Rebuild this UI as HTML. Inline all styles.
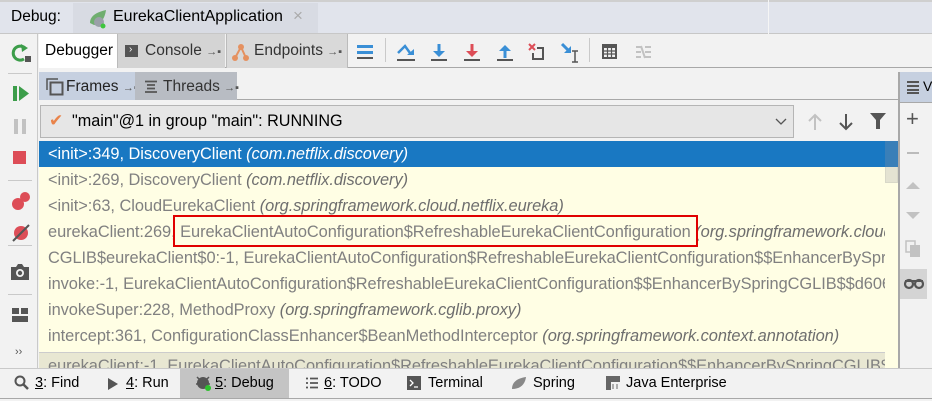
<!DOCTYPE html>
<html><head><meta charset="utf-8"><style>
*{margin:0;padding:0;box-sizing:border-box}
body{width:932px;height:401px;overflow:hidden;background:#f2f2f2;font-family:"Liberation Sans",sans-serif;font-size:14px;color:#000;position:relative}
.a{position:absolute;white-space:nowrap}
.row{position:absolute;left:39px;width:846px;height:26px;line-height:26px;padding-left:9px;color:#808080;font-size:16.4px;letter-spacing:-0.05px;white-space:nowrap;overflow:hidden}
.row i{color:#6e6e6e}
.sep{position:absolute;background:#c9c9c9}
</style></head><body>
<div class="a" style="left:0;top:0;width:932px;height:34px;background:#e1e4ec;border-top:2px solid #cfcfcf;border-bottom:1px solid #c7c7c7"></div>
<div class="a" style="left:768px;top:0;width:1px;height:34px;background:#f5f5f5"></div>
<div class="a" style="left:11px;top:8px;font-size:15.5px">Debug:</div>
<div class="a" style="left:73px;top:3px;width:245px;height:30px;background:#d8dbe3"></div>
<svg class="a" style="left:88px;top:9px" width="22" height="20"><path d="M2 14 C2 6 10 3 18 1 C17 8 14 15 6 16 Z" fill="#6fae6f"/><circle cx="11" cy="13" r="5" fill="#9aa0a8"/><circle cx="15" cy="17" r="2.5" fill="#3ec63e"/></svg>
<div class="a" style="left:113px;top:8px;font-size:16px">EurekaClientApplication</div>
<div class="a" style="left:293px;top:6px;font-size:17px;color:#aaa">×</div>
<div class="a" style="left:0;top:34px;width:38px;height:334px;background:#f2f2f2;border-right:1px solid #c9c9c9"></div>
<svg class="a" style="left:10px;top:42px" width="22" height="22"><path d="M15 6 A7 7 0 1 0 14 17" stroke="#3c9d4a" stroke-width="3" fill="none"/><path d="M11 2 L18 6 L12 10Z" fill="#3c9d4a"/><rect x="15" y="14" width="6" height="6" fill="#555"/></svg>
<div class="sep" style="left:8px;top:73px;width:24px;height:1px"></div>
<svg class="a" style="left:12px;top:85px" width="18" height="18"><rect x="1" y="1" width="4" height="15" fill="#3c9d4a"/><path d="M7 1 L17 8.5 L7 16Z" fill="#3c9d4a"/></svg>
<svg class="a" style="left:12px;top:118px" width="18" height="18"><rect x="2" y="1" width="4" height="15" fill="#c2c2c2"/><rect x="10" y="1" width="4" height="15" fill="#c2c2c2"/></svg>
<div class="a" style="left:13px;top:151px;width:13px;height:13px;background:#dd4d57"></div>
<div class="sep" style="left:8px;top:180px;width:24px;height:1px"></div>
<svg class="a" style="left:10px;top:190px" width="22" height="22"><circle cx="8" cy="14" r="6" fill="#dd4d57"/><circle cx="15" cy="7" r="5" fill="#dd4d57"/></svg>
<svg class="a" style="left:10px;top:222px" width="22" height="22"><circle cx="11" cy="11" r="7" fill="#dd4d57"/><path d="M3 19 L19 3" stroke="#555" stroke-width="2"/></svg>
<div class="sep" style="left:8px;top:245px;width:24px;height:1px"></div>
<svg class="a" style="left:10px;top:263px" width="20" height="18"><path d="M1 4 H6 L8 1 H12 L14 4 H19 V17 H1Z" fill="#555"/><circle cx="10" cy="10" r="4" fill="#f2f2f2"/><circle cx="10" cy="10" r="2.2" fill="#555"/></svg>
<div class="sep" style="left:8px;top:294px;width:24px;height:1px"></div>
<svg class="a" style="left:11px;top:307px" width="18" height="16"><rect x="1" y="1" width="7" height="6" fill="#555"/><rect x="10" y="1" width="7" height="6" fill="#555"/><rect x="1" y="9" width="16" height="6" fill="#555"/></svg>
<div class="a" style="left:15px;top:346px;font-size:11px;color:#555">››</div>
<div class="a" style="left:39px;top:34px;width:893px;height:34px;background:#f2f2f2;border-bottom:1px solid #a8a8a8"></div>
<div class="a" style="left:39px;top:34px;width:78px;height:34px;background:#fff"></div>
<div class="a" style="left:45px;top:42px;font-size:15.5px">Debugger</div>
<div class="a" style="left:117px;top:34px;width:108px;height:34px;background:#d4d4d4;border-left:1px solid #bbb"></div>
<div class="a" style="left:125px;top:45px;width:13px;height:12px;background:#555"></div>
<div class="a" style="left:129px;top:44px;font-size:10px;color:#fff">›</div>
<div class="a" style="left:145px;top:42px;font-size:15.5px;color:#333">Console <span style="font-size:11px;color:#555">→▪</span></div>
<div class="a" style="left:226px;top:34px;width:122px;height:34px;background:#d9d9d9;border-left:1px solid #bbb;border-right:1px solid #bbb"></div>
<svg class="a" style="left:231px;top:42px" width="20" height="20"><path d="M4 16 L10 5 L15 16" stroke="#e59160" stroke-width="2" fill="none"/><circle cx="10" cy="5" r="3" fill="#e59160"/><circle cx="4" cy="16" r="3" fill="#e59160"/><circle cx="15" cy="16" r="3" fill="#e59160"/></svg>
<div class="a" style="left:254px;top:42px;font-size:15.5px;color:#333">Endpoints <span style="font-size:11px;color:#555">→▪</span></div>
<svg class="a" style="left:357px;top:44px" width="18" height="16"><rect y="1" width="16" height="3" fill="#3a8fd6"/><rect y="7" width="16" height="3" fill="#3a8fd6"/><rect y="13" width="16" height="2" fill="#555"/></svg>
<div class="sep" style="left:385px;top:38px;width:1px;height:24px"></div>
<svg class="a" style="left:396px;top:42px" width="20" height="20"><path d="M2 11 L9 4 L14 11" stroke="#3a8fd6" stroke-width="2.5" fill="none"/><path d="M11 13 L18 13 L18 7Z" fill="#3a8fd6"/><rect x="1" y="17" width="18" height="2" fill="#555"/></svg>
<svg class="a" style="left:429px;top:42px" width="20" height="20"><path d="M10 2 V12" stroke="#3a8fd6" stroke-width="3"/><path d="M4 9 L10 15 L16 9Z" fill="#3a8fd6"/><rect x="2" y="17" width="16" height="2" fill="#555"/></svg>
<svg class="a" style="left:462px;top:42px" width="20" height="20"><path d="M10 2 V12" stroke="#dd4d57" stroke-width="3"/><path d="M4 9 L10 15 L16 9Z" fill="#dd4d57"/><rect x="2" y="17" width="16" height="2" fill="#555"/></svg>
<svg class="a" style="left:495px;top:42px" width="20" height="20"><path d="M10 16 V7" stroke="#3a8fd6" stroke-width="3"/><path d="M4 9 L10 3 L16 9Z" fill="#3a8fd6"/><rect x="2" y="17" width="16" height="2" fill="#555"/></svg>
<svg class="a" style="left:527px;top:42px" width="20" height="20"><path d="M2 2 L8 8 M8 2 L2 8" stroke="#dd4d57" stroke-width="2"/><path d="M10 6 H16 V17 H6 V11" stroke="#555" stroke-width="2" fill="none"/></svg>
<svg class="a" style="left:560px;top:42px" width="22" height="22"><path d="M2 2 L9 9" stroke="#3a8fd6" stroke-width="3"/><path d="M11 4 V11 H4Z" fill="#3a8fd6"/><path d="M12 9 H18 M15 9 V20 M12 20 H18" stroke="#555" stroke-width="1.5"/></svg>
<div class="sep" style="left:589px;top:38px;width:1px;height:24px"></div>
<svg class="a" style="left:601px;top:43px" width="17" height="17"><rect x="1" y="1" width="15" height="15" fill="#555"/><rect x="3" y="5" width="11" height="9" fill="#f2f2f2"/><path d="M3 8 H14 M3 11 H14 M6.5 5 V14 M10.5 5 V14" stroke="#555" stroke-width="1.2"/></svg>
<svg class="a" style="left:635px;top:43px" width="17" height="17"><path d="M1 4 H6 M1 9 H6 M1 14 H6 M10 4 H16 M10 9 H16 M10 14 H16 M6 3 L10 15" stroke="#c2c2c2" stroke-width="2"/></svg>
<div class="a" style="left:39px;top:72px;width:859px;height:28px;background:#f2f2f2;border-bottom:1px solid #a8a8a8"></div>
<div class="a" style="left:39px;top:72px;width:96px;height:28px;background:#c6d0e0"></div>
<svg class="a" style="left:46px;top:78px" width="18" height="18"><path d="M1 12 V1 H12" stroke="#555" stroke-width="1.5" fill="none"/><rect x="4.5" y="4.5" width="12" height="12" stroke="#555" stroke-width="2" fill="none"/></svg>
<div class="a" style="left:66px;top:78px;font-size:15.5px;color:#222">Frames <span style="font-size:11px;color:#555">→▪</span></div>
<div class="a" style="left:135px;top:72px;width:102px;height:28px;background:#b8bcc3"></div>
<svg class="a" style="left:144px;top:80px" width="14" height="14"><path d="M1 1.5 H13 M3 5 H11 M3 8.5 H11 M1 12 H13" stroke="#555" stroke-width="1.8"/></svg>
<div class="a" style="left:163px;top:78px;font-size:15.5px;color:#333">Threads <span style="font-size:11px;color:#555">→▪</span></div>
<div class="a" style="left:898px;top:72px;width:34px;height:296px;background:#f2f2f2;border-left:2px solid #a8a8a8"></div>
<div class="a" style="left:900px;top:72px;width:32px;height:31px;background:#c6d0e0;border-bottom:1px solid #a8a8a8"></div>
<svg class="a" style="left:906px;top:80px" width="14" height="14"><path d="M1 2 H13 M1 6 H13 M1 10 H13 M1 13 H13" stroke="#555" stroke-width="2"/></svg>
<div class="a" style="left:923px;top:78px;font-size:14px">V</div>
<div class="a" style="left:906px;top:108px;font-size:22px;color:#555;line-height:22px">+</div>
<div class="a" style="left:907px;top:152px;width:12px;height:2px;background:#bbb"></div>
<svg class="a" style="left:905px;top:180px" width="16" height="10"><path d="M1 9 L8 2 L15 9Z" fill="#c2c2c2"/></svg>
<svg class="a" style="left:905px;top:211px" width="16" height="10"><path d="M1 1 L8 8 L15 1Z" fill="#c2c2c2"/></svg>
<svg class="a" style="left:905px;top:240px" width="16" height="18"><rect x="1" y="1" width="9" height="11" fill="none" stroke="#c2c2c2" stroke-width="1.5"/><rect x="5" y="5" width="10" height="12" fill="#c2c2c2"/></svg>
<div class="a" style="left:900px;top:269px;width:27px;height:30px;background:#d4d4d4"></div>
<svg class="a" style="left:904px;top:278px" width="20" height="12"><circle cx="5" cy="6" r="4" fill="none" stroke="#555" stroke-width="2.2"/><circle cx="15" cy="6" r="4" fill="none" stroke="#555" stroke-width="2.2"/><path d="M1 3 H19" stroke="#555" stroke-width="2"/></svg>
<div class="a" style="left:40px;top:105px;width:754px;height:33px;background:#e6e6e6;border:1px solid #b5b5b5"></div>
<div class="a" style="left:49px;top:111px;font-size:17px;color:#e9834a">✔</div>
<div class="a" style="left:72px;top:112px;font-size:16.2px">"main"@1 in group "main": RUNNING</div>
<svg class="a" style="left:775px;top:118px" width="12" height="8"><path d="M1 1 L6 6 L11 1" stroke="#555" stroke-width="1.3" fill="none"/></svg>
<svg class="a" style="left:807px;top:112px" width="16" height="20"><path d="M8 18 V3 M2 9 L8 3 L14 9" stroke="#c2c2c2" stroke-width="2" fill="none"/></svg>
<svg class="a" style="left:838px;top:112px" width="16" height="20"><path d="M8 2 V17 M2 11 L8 17 L14 11" stroke="#555" stroke-width="2" fill="none"/></svg>
<svg class="a" style="left:869px;top:112px" width="18" height="18"><path d="M1 1 H17 L11 8 V17 H7 V8Z" fill="#555"/></svg>
<div class="a" style="left:39px;top:141px;width:859px;height:227px;background:#fffee4;overflow:hidden"></div>
<div class="a" style="left:885px;top:141px;width:13px;height:42px;background:#e4e3d2;border:1px solid #d8d8c8"></div>
<div class="row" style="top:141px;background:#1978c2;color:#fff;width:846px">&lt;init&gt;:349, DiscoveryClient <i style="color:#fff">(com.netflix.discovery)</i></div>
<div class="a" style="left:885px;top:141px;width:13px;height:26px;background:#3a7fb8"></div>
<div class="row" style="top:167px">&lt;init&gt;:269, DiscoveryClient <i>(com.netflix.discovery)</i></div>
<div class="row" style="top:193px">&lt;init&gt;:63, CloudEurekaClient <i>(org.springframework.cloud.netflix.eureka)</i></div>
<div class="row" style="top:219px">eurekaClient:269, EurekaClientAutoConfiguration$RefreshableEurekaClientConfiguration <i>(org.springframework.cloud.netflix.eureka)</i></div>
<div class="row" style="top:245px">CGLIB$eurekaClient$0:-1, EurekaClientAutoConfiguration$RefreshableEurekaClientConfiguration$$EnhancerBySpringCGLIB</div>
<div class="row" style="top:271px">invoke:-1, EurekaClientAutoConfiguration$RefreshableEurekaClientConfiguration$$EnhancerBySpringCGLIB$$d606b7</div>
<div class="row" style="top:297px">invokeSuper:228, MethodProxy <i>(org.springframework.cglib.proxy)</i></div>
<div class="row" style="top:323px">intercept:361, ConfigurationClassEnhancer$BeanMethodInterceptor <i>(org.springframework.context.annotation)</i></div>
<div class="row" style="top:352px;background:#e8e7d2;border-top:1px solid #ccc">eurekaClient:-1, EurekaClientAutoConfiguration$RefreshableEurekaClientConfiguration$$EnhancerBySpringCGLIB$$d</div>
<div class="a" style="left:173px;top:215px;width:525px;height:32px;border:2px solid #e00000"></div>
<div class="a" style="left:0;top:368px;width:932px;height:31px;background:#f2f2f2;border-top:1px solid #c9c9c9;border-bottom:1px solid #a8a8a8"></div>
<div class="a" style="left:180px;top:369px;width:109px;height:29px;background:#c4c4c4"></div>
<svg class="a" style="left:14px;top:375px" width="16" height="16"><circle cx="6" cy="6" r="4.5" stroke="#555" stroke-width="2" fill="none"/><path d="M9.5 9.5 L14 14" stroke="#555" stroke-width="2.5"/></svg>
<div class="a" style="left:35px;top:375px;font-size:14.5px"><u>3</u>: Find</div>
<svg class="a" style="left:107px;top:377px" width="12" height="14"><path d="M1 1 L11 7 L1 13Z" fill="#555"/></svg>
<div class="a" style="left:126px;top:375px;font-size:14.5px"><u>4</u>: Run</div>
<svg class="a" style="left:195px;top:374px" width="18" height="18"><circle cx="8" cy="9" r="6" fill="#555"/><path d="M2 3 L5 6 M14 3 L11 6 M1 10 H3 M13 10 H15" stroke="#555" stroke-width="1.5"/><circle cx="13" cy="14" r="3" fill="#2ec02e"/></svg>
<div class="a" style="left:215px;top:375px;font-size:14.5px"><u>5</u>: Debug</div>
<svg class="a" style="left:305px;top:377px" width="14" height="12"><path d="M1 1.5 H3 M5 1.5 H13 M1 6 H3 M5 6 H13 M1 10.5 H3 M5 10.5 H13" stroke="#555" stroke-width="1.8"/></svg>
<div class="a" style="left:324px;top:375px;font-size:14.5px"><u>6</u>: TODO</div>
<svg class="a" style="left:407px;top:376px" width="14" height="14"><rect width="14" height="14" fill="#555"/><path d="M3 4 L6 7 L3 10 M7 11 H11" stroke="#fff" stroke-width="1.3" fill="none"/></svg>
<div class="a" style="left:428px;top:375px;font-size:14.5px">Terminal</div>
<svg class="a" style="left:511px;top:376px" width="16" height="14"><path d="M1 13 C1 5 8 2 15 1 C14 8 10 13 1 13Z" fill="#888"/></svg>
<div class="a" style="left:533px;top:375px;font-size:14.5px">Spring</div>
<svg class="a" style="left:606px;top:376px" width="16" height="15"><rect x="0" y="0" width="14" height="14" fill="#666"/><rect x="5" y="6" width="9" height="8" fill="#f2f2f2"/><path d="M7 8 V13 M11 8 V13" stroke="#666"/></svg>
<div class="a" style="left:626px;top:375px;font-size:14.5px">Java Enterprise</div>
</body></html>
